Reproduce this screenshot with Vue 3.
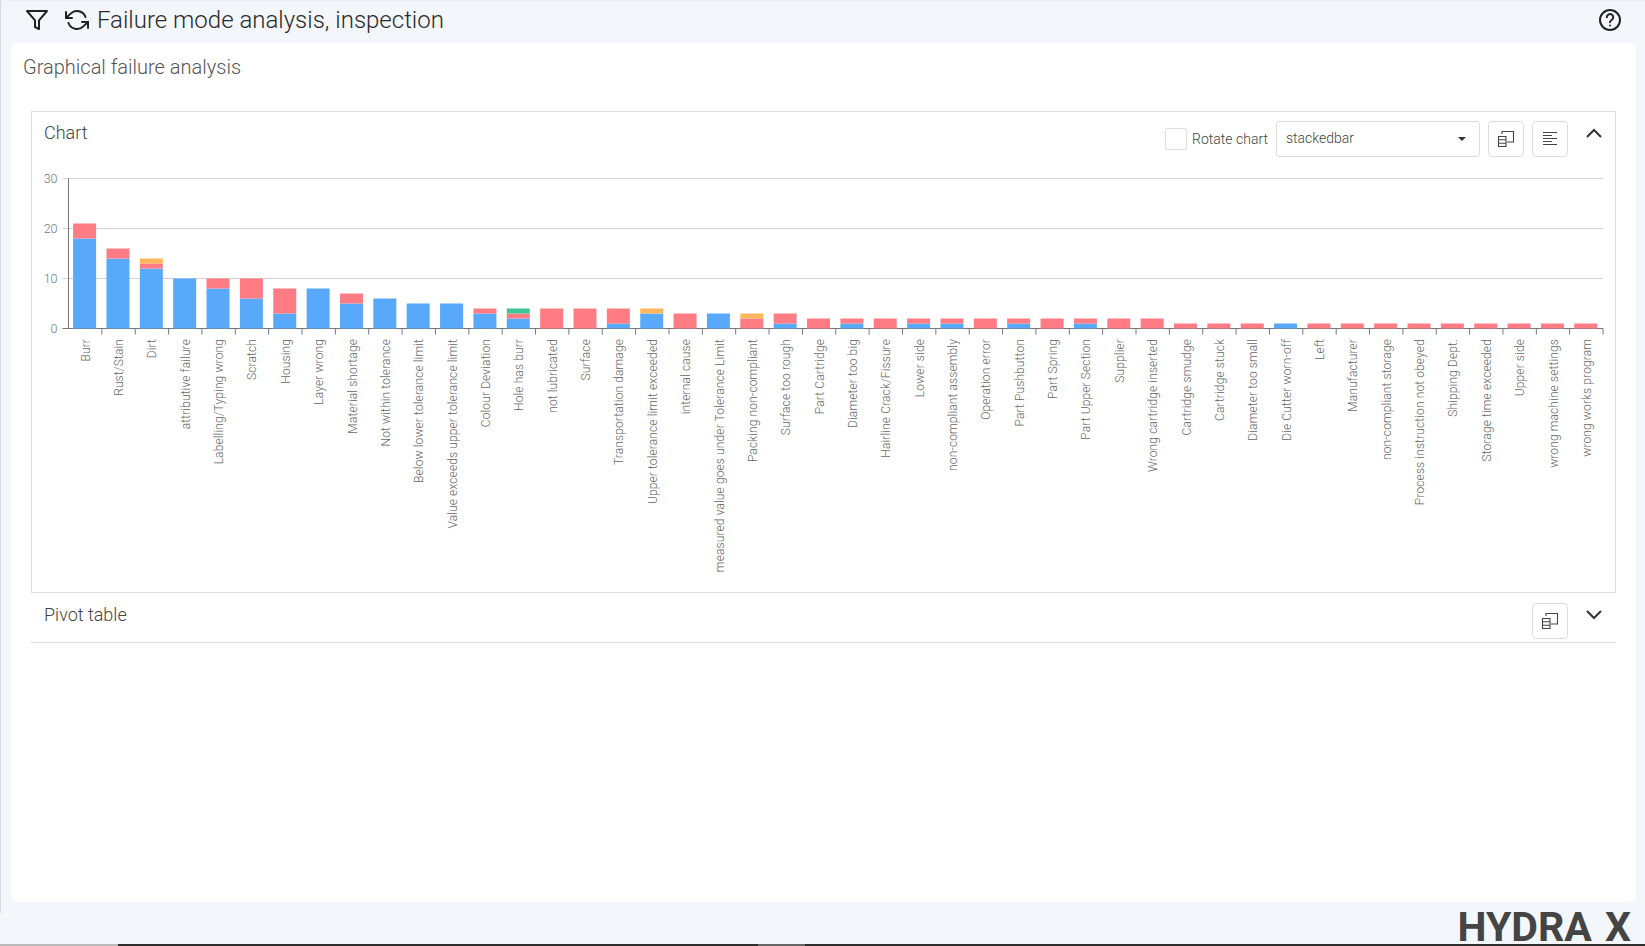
<script setup>
const rows = [
  ['Burr', 18, 3], ['Rust/Stain', 14, 2], ['Dirt', 12, 1, 1], ['attributive failure', 10], ['Labelling/Typing wrong', 8, 2],
  ['Scratch', 6, 4], ['Housing', 3, 5], ['Layer wrong', 8], ['Material shortage', 5, 2], ['Not within tolerance', 6],
  ['Below lower tolerance limit', 5], ['Value exceeds upper tolerance limit', 5], ['Colour Deviation', 3, 1], ['Hole has burr', 2, 1, 0, 1],
  ['not lubricated', 0, 4], ['Surface', 0, 4], ['Transportation damage', 1, 3], ['Upper tolerance limit exceeded', 3, 0, 1],
  ['internal cause', 0, 3], ['measured value goes under Tolerance Limit', 3], ['Packing non-compliant', 0, 2, 1], ['Surface too rough', 1, 2],
  ['Part Cartridge', 0, 2], ['Diameter too big', 1, 1], ['Hairline Crack/Fissure', 0, 2], ['Lower side', 1, 1], ['non-compliant assembly', 1, 1],
  ['Operation error', 0, 2], ['Part Pushbutton', 1, 1], ['Part Spring', 0, 2], ['Part Upper Section', 1, 1], ['Supplier', 0, 2],
  ['Wrong cartridge inserted', 0, 2], ['Cartridge smudge', 0, 1], ['Cartridge stuck', 0, 1], ['Diameter too small', 0, 1], ['Die Cutter worn-off', 1],
  ['Left', 0, 1], ['Manufacturer', 0, 1], ['non-compliant storage', 0, 1], ['Process instruction not obeyed', 0, 1], ['Shipping Dept.', 0, 1],
  ['Storage time exceeded', 0, 1], ['Upper side', 0, 1], ['wrong machine settings', 0, 1], ['wrong works program', 0, 1]
]
const colors = ['#59a9fb', '#ff7c85', '#ffb55a', '#3cc896']
const x0 = 36.5
const base = 160.5
const step = 33.36
const unit = 5
const categories = rows.map((r, i) => {
  let acc = 0
  const segs = []
  r.slice(1).forEach((v, k) => {
    if (v > 0) {
      acc += v
      segs.push({ color: colors[k], y: base - acc * unit, h: v * unit })
    }
  })
  return { label: r[0], left: x0 + i * step, mid: x0 + (i + 0.5) * step, tick: x0 + (i + 1) * step, segs }
})
const yTicks = [0, 10, 20, 30]
</script>

<template>
  <div class="page">
    <header class="topbar">
      <svg class="ico-filter" width="24" height="24" viewBox="0 0 24 24" fill="none" stroke="#222" stroke-width="2" stroke-linejoin="round">
        <path d="M22 3H2l8 9.46V19l4 2v-8.54z" />
      </svg>
      <svg class="ico-sync" width="24" height="24" viewBox="0 0 24 24" fill="none" stroke="#222" stroke-width="2" stroke-linecap="round" stroke-linejoin="round">
        <path d="M1 4v6h6" />
        <path d="M23 20v-6h-6" />
        <path d="M20.49 9A9 9 0 0 0 5.64 5.64L1 10m22 4l-4.64 4.36A9 9 0 0 1 3.51 15" />
      </svg>
      <h1 class="title">Failure mode analysis, inspection</h1>
      <svg class="ico-help" width="24" height="24" viewBox="0 0 24 24" fill="none" stroke="#222" stroke-width="2" stroke-linecap="round">
        <circle cx="12" cy="12" r="10" />
        <path d="M8.8 9.3a3.2 3.2 0 1 1 4.9 2.7c-1 .6-1.7 1.2-1.7 2.3" />
        <path d="M12 17.4v.2" />
      </svg>
    </header>

    <main class="card">
      <h2 class="subtitle">Graphical failure analysis</h2>

      <section class="panel chart-panel">
        <div class="panel-head">
          <span class="panel-title">Chart</span>
          <div class="controls">
            <span class="checkbox"></span>
            <span class="rotate">Rotate chart</span>
            <div class="select"><span>stackedbar</span><i class="caret"></i></div>
            <button class="btn">
              <svg width="18" height="18" viewBox="0 0 18 18" fill="none" stroke="#444" stroke-width="1.1">
                <path d="M5 4V1.5h11.5V12H10" />
                <path d="M1.5 6.5h7.5v10H1.5zM1.5 9.8h7.5M1.5 13.2h7.5" />
              </svg>
            </button>
            <button class="btn">
              <svg width="18" height="18" viewBox="0 0 18 18" fill="none" stroke="#444" stroke-width="1">
                <path d="M2 2.5h14M2 5.5h9M2 8.5h14M2 11.5h9M2 14.5h14" />
              </svg>
            </button>
            <svg class="chev chev-up" width="18" height="12" viewBox="0 0 18 12" fill="none" stroke="#333" stroke-width="2">
              <path d="M2 10l7-7 7 7" />
            </svg>
          </div>
        </div>

        <svg class="chart" width="1583" height="424" viewBox="0 0 1583 424">
          <g v-for="t in yTicks" :key="t">
            <line :x1="x0 - 6" :x2="x0 + 46 * step" :y1="base - t * unit" :y2="base - t * unit" :stroke="t === 0 ? '#777' : '#d2d2d2'" />
            <text class="ylab" :x="x0 - 11" :y="base - t * unit + 4.5" text-anchor="end">{{ t }}</text>
          </g>
          <line :x1="x0" :x2="x0" :y1="base - 150" :y2="base" stroke="#777" />
          <g v-for="c in categories" :key="c.label">
            <rect v-for="s in c.segs" :key="s.color" :x="c.left + 4.6" :y="s.y" width="23" :height="s.h" :fill="s.color" />
            <line :x1="c.tick" :x2="c.tick" :y1="base" :y2="base + 6" stroke="#777" />
            <text class="xlab" text-anchor="end" :transform="`translate(${c.mid + 4.5} ${base + 10.5}) rotate(-90)`">{{ c.label }}</text>
          </g>
        </svg>
      </section>

      <section class="panel pivot-panel">
        <span class="panel-title">Pivot table</span>
        <div class="controls">
          <button class="btn">
            <svg width="18" height="18" viewBox="0 0 18 18" fill="none" stroke="#444" stroke-width="1.1">
              <path d="M5 4V1.5h11.5V12H10" />
              <path d="M1.5 6.5h7.5v10H1.5zM1.5 9.8h7.5M1.5 13.2h7.5" />
            </svg>
          </button>
          <svg class="chev chev-down" width="18" height="12" viewBox="0 0 18 12" fill="none" stroke="#333" stroke-width="2">
            <path d="M2 2l7 7 7-7" />
          </svg>
        </div>
      </section>
    </main>

    <footer class="foot"><span class="logo">HYDRA X</span></footer>
    <div class="taskbar"><i class="tb-thumb"></i></div>
  </div>
</template>

<style>
html, body { margin: 0; padding: 0; overflow: hidden; }
</style>

<style scoped>
.page {
  width: 1645px;
  height: 946px;
  box-sizing: border-box;
  background: #f3f6fb;
  display: flex;
  flex-direction: column;
  font-family: Roboto, "Noto Sans", sans-serif;
  position: relative;
  overflow: hidden;
  border-top: 1px solid #eceef1;
}
.page::before {
  content: "";
  position: absolute;
  left: 0;
  top: 0;
  width: 1px;
  height: 912px;
  background: #d5d8dc;
}
.topbar {
  height: 42px;
  flex: none;
  box-sizing: border-box;
  display: flex;
  align-items: center;
  padding: 0 23px 4px 25px;
}
.ico-filter { margin-right: 16px; }
.ico-sync { margin-right: 8px; }
.title {
  margin: 0;
  flex: 1;
  font-size: 24px;
  font-weight: 300;
  color: #2a2a2a;
  white-space: nowrap;
}
.card {
  margin-left: 11px;
  width: 1625px;
  height: 859px;
  flex: none;
  box-sizing: border-box;
  background: #fff;
  border-radius: 6px;
  padding: 12px 20px 0;
}
.subtitle {
  margin: 0 0 0 -8px;
  height: 56px;
  font-size: 20px;
  line-height: 24px;
  font-weight: 300;
  color: #555;
}
.panel { box-sizing: border-box; }
.chart-panel {
  height: 482px;
  border: 1px solid #ddd;
  padding: 9px 0 0 12px;
}
.panel-head {
  display: flex;
  justify-content: space-between;
  height: 47px;
}
.panel-title {
  font-size: 18px;
  line-height: 24px;
  font-weight: 300;
  color: #444;
}
.controls {
  display: flex;
  align-items: flex-start;
}
.checkbox {
  width: 22px;
  height: 22px;
  margin: 7px 5px 0 0;
  border: 1px solid #ddd;
  border-radius: 2px;
  box-sizing: border-box;
}
.rotate {
  font-size: 14px;
  font-weight: 300;
  color: #444;
  line-height: 35px;
  margin: 1px 8px 0 0;
  white-space: nowrap;
}
.select {
  width: 204px;
  height: 36px;
  box-sizing: border-box;
  border: 1px solid #ddd;
  border-radius: 3px;
  padding: 0 10px 0 9px;
  display: flex;
  align-items: center;
  justify-content: space-between;
  font-size: 14px;
  font-weight: 300;
  color: #444;
  margin-right: 8px;
}
.select span { margin-top: -2px; }
.caret {
  width: 0;
  height: 0;
  border-left: 4px solid transparent;
  border-right: 4px solid transparent;
  border-top: 4px solid #333;
  margin-right: 3px;
}
.btn {
  width: 36px;
  height: 36px;
  padding: 0;
  box-sizing: border-box;
  background: #fff;
  border: 1px solid #ddd;
  border-radius: 4px;
  margin-right: 8px;
  display: flex;
  align-items: center;
  justify-content: center;
}
.chev-up { margin: 6px 12px 0 9px; }
.chev-down { margin: 6px 12px 0 9px; }
.chart { display: block; margin-left: -12px; }
.ylab { font-size: 12.5px; fill: #777; font-family: Roboto, sans-serif; font-weight: 300; }
.xlab { font-size: 12px; letter-spacing: 0.12px; fill: #666; font-family: Roboto, sans-serif; font-weight: 300; }
.pivot-panel {
  height: 50px;
  padding: 10px 1px 0 13px;
  border-bottom: 1px solid #ddd;
  display: flex;
  justify-content: space-between;
}
.foot {
  flex: 1;
  display: flex;
  justify-content: flex-end;
  align-items: flex-start;
  padding-right: 14px;
  min-height: 0;
}
.logo {
  font-size: 41px;
  font-weight: 700;
  line-height: 30px;
  margin-top: 10px;
  color: #444;
  letter-spacing: 0;
  word-spacing: 3px;
  white-space: nowrap;
}
.taskbar {
  position: absolute;
  left: 0;
  right: 0;
  bottom: 0;
  height: 2px;
  background: linear-gradient(to right, #bbb 0 118px, #2e2e2e 118px);
}
.tb-thumb {
  position: absolute;
  left: 758px;
  top: 0;
  width: 47px;
  height: 2px;
  background: #666;
}
</style>
